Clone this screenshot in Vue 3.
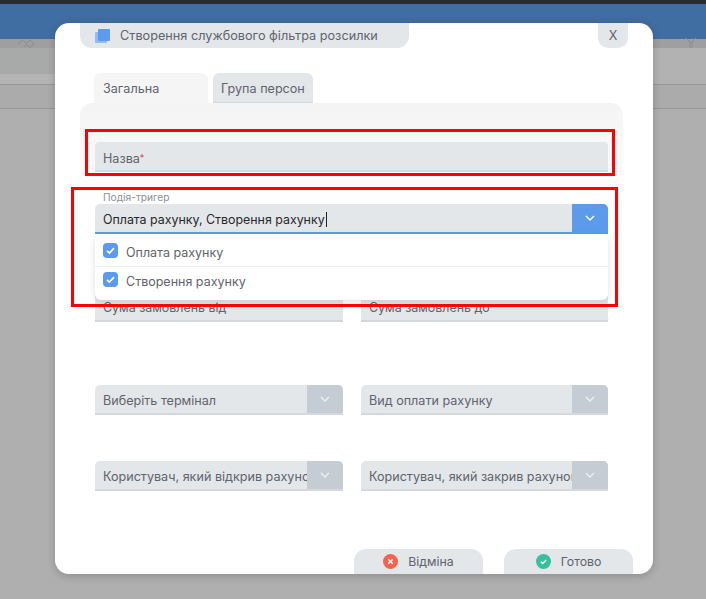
<template>
  <div class="page">
    <div class="topline"></div>
    <div class="topbar"></div>
    <div class="subbar"></div>
    <div class="toolbar"></div>
    <div class="strip"></div>
    <div class="band"></div>
    <svg class="bg-icon bg-left" width="18" height="10" viewBox="0 0 18 10"><path d="M1 6l4.500-4.500L10 6l-3 3M9 6l4-4 4 4-4 3.500z" fill="none" stroke="#8c8c8c" stroke-width="1"/></svg>
    <svg class="bg-icon bg-right" width="12" height="10" viewBox="0 0 12 10"><path d="M1 0l4 4h2l4-4M5 4v6M7 4v6" fill="none" stroke="#8c8c8c" stroke-width="1"/></svg>

    <div class="modal">
      <div class="head">
        <div class="title">
          <svg width="16" height="16" viewBox="0 0 16 16">
            <rect x="0" y="4" width="12" height="11" rx="1" fill="#8fbcf5"/>
            <rect x="3" y="1" width="12" height="12" rx="1" fill="#5c9bec"/>
          </svg>
          <span>Створення службового фільтра розсилки</span>
        </div>
        <div class="close">X</div>
      </div>

      <div class="tabs">
        <div class="tab active">Загальна</div>
        <div class="tab">Група персон</div>
      </div>

      <div class="panel">
        <div class="field name-field"><span>Назва<i>*</i></span></div>

        <div class="trigger-label">Подія-тригер</div>
        <div class="trigger">
          <div class="select open">
            <div class="value">Оплата рахунку, Створення рахунку<b class="caret"></b></div>
            <div class="arrow">
              <svg width="10" height="6" viewBox="0 0 10 6"><path d="M1 1l4 4 4-4" fill="none" stroke="#fff" stroke-width="1.4"/></svg>
            </div>
          </div>
          <div class="dropdown">
            <div class="option" v-for="o in options" :key="o">
              <svg width="15" height="15" viewBox="0 0 15 15">
                <rect width="15" height="15" rx="4" fill="#5c9bec"/>
                <path d="M4 7.800l2.400 2.300L11 5.200" fill="none" stroke="#fff" stroke-width="1.700"/>
              </svg>
              <span>{{ o }}</span>
            </div>
          </div>
        </div>

        <div class="grid sums">
          <div class="field" v-for="s in sums" :key="s"><span>{{ s }}</span></div>
        </div>

        <div class="grid selects">
          <div class="select" v-for="s in selects" :key="s">
            <div class="value">{{ s }}</div>
            <div class="arrow">
              <svg width="10" height="6" viewBox="0 0 10 6"><path d="M1 1l4 4 4-4" fill="none" stroke="#eef0f2" stroke-width="1.400"/></svg>
            </div>
          </div>
        </div>
      </div>

      <div class="foot">
        <div class="btn">
          <svg width="15" height="15" viewBox="0 0 15 15">
            <circle cx="7.500" cy="7.500" r="7.500" fill="#f4634d"/>
            <path d="M5.200 5.200l4.600 4.600M9.800 5.200l-4.600 4.600" stroke="#fff" stroke-width="1.400"/>
          </svg>
          <span>Відміна</span>
        </div>
        <div class="btn">
          <svg width="15" height="15" viewBox="0 0 15 15">
            <circle cx="7.500" cy="7.500" r="7.500" fill="#38bf9b"/>
            <path d="M4.800 7.800l1.900 1.800 3.500-3.700" fill="none" stroke="#fff" stroke-width="1.400"/>
          </svg>
          <span>Готово</span>
        </div>
      </div>

      <div class="mark mark-name"></div>
      <div class="mark mark-trigger"></div>
    </div>
  </div>
</template>

<script setup>
const options = ['Оплата рахунку', 'Створення рахунку']
const sums = ['Сума замовлень від', 'Сума замовлень до']
const selects = [
  'Виберіть термінал',
  'Вид оплати рахунку',
  'Користувач, який відкрив рахунок',
  'Користувач, який закрив рахунок'
]
</script>

<style>
html, body {
  margin: 0;
  background: #afafaf;
}
</style>

<style scoped>
.page {
  position: relative;
  width: 706px;
  height: 599px;
  overflow: hidden;
  background: #afafaf;
  font-family: Inter, "Noto Sans", sans-serif;
  font-size: 12.6px;
  color: #5f636d;
}
.topline {
  height: 4px;
  background: #2a2b35;
}
.topbar {
  height: 35px;
  background: #406da2;
}
.subbar {
  height: 9px;
  background: #9e9f9f;
}
.toolbar {
  height: 26px;
  background: linear-gradient(to right, #a8aaaa 353px, #b2b2b2 353px);
}
.strip {
  height: 10px;
  background: linear-gradient(to right, #b4b4b4 353px, #b2b2b2 353px);
}
.band {
  height: 25px;
  box-sizing: border-box;
  border-top: 1px solid #979797;
  border-bottom: 1px solid #979797;
  background: #ababab;
}
.bg-icon {
  position: absolute;
  top: 38px;
}
.bg-left { left: 17px; }
.bg-right { left: 685px; }

.modal {
  position: absolute;
  left: 55px;
  top: 23px;
  box-sizing: border-box;
  width: 598px;
  height: 551px;
  padding: 0 25px;
  background: #fff;
  border-radius: 14px;
  box-shadow: 0 2px 8px rgba(0, 0, 0, 0.2);
  overflow: hidden;
}
.head {
  display: flex;
  justify-content: space-between;
}
.title {
  display: flex;
  align-items: center;
  gap: 9px;
  width: 329px;
  height: 25px;
  box-sizing: border-box;
  padding-left: 15px;
  background: #e4e7ea;
  border-radius: 0 0 12px 12px;
  font-size: 12.7px;
}
.close {
  width: 30px;
  height: 25px;
  line-height: 25px;
  text-align: center;
  background: #e4e7ea;
  border-radius: 0 0 10px 10px;
}
.tabs {
  display: flex;
  gap: 5px;
  margin: 25px 0 0 14px;
}
.tab {
  height: 30px;
  line-height: 31px;
  padding: 0 8px;
  box-sizing: border-box;
  background: #e4e7ea;
  border-radius: 6px 6px 0 0;
  border-bottom: 1px solid #d5d9de;
}
.tab.active {
  width: 114px;
  padding-left: 9px;
  background: #f5f5f5;
  border-bottom: 0;
}
.panel {
  width: 543px;
  height: 440px;
  padding: 39px 15px 0;
  box-sizing: border-box;
  border-radius: 12px 12px 0 0;
  background: linear-gradient(#f4f4f5 0, #fff 100px);
}
.field {
  height: 30px;
  box-sizing: border-box;
  padding: 0 8px;
  line-height: 31px;
  background: #e4e7ea;
  border-bottom: 2px solid #d5d9de;
  border-radius: 4px 4px 0 0;
}
.field i {
  color: #e8314a;
  font-style: normal;
  font-size: 9px;
  vertical-align: 2px;
}
.trigger-label {
  margin: 18px 0 0 8px;
  height: 14px;
  font-size: 10.2px;
  line-height: 14px;
  color: #8b9098;
}
.trigger {
  position: relative;
}
.select {
  display: flex;
  height: 30px;
  box-sizing: border-box;
  background: #e4e7ea;
  border-bottom: 2px solid #d5d9de;
  border-radius: 5px 5px 0 0;
  overflow: hidden;
}
.select.open {
  border-bottom-color: #5c9bec;
}
.select.open .value {
  color: #25272c;
  font-size: 12.4px;
}
.value {
  flex: 1;
  min-width: 0;
  padding-left: 8px;
  line-height: 31px;
  white-space: nowrap;
  overflow: hidden;
  font-size: 12.6px;
}
.caret {
  display: inline-block;
  width: 1px;
  height: 15px;
  margin-left: 1px;
  vertical-align: -3px;
  background: #222;
}
.arrow {
  display: flex;
  align-items: center;
  justify-content: center;
  flex: 0 0 36px;
  background: #c6ccd4;
}
.open .arrow {
  background: #5c9bec;
}
.dropdown {
  position: absolute;
  left: 0;
  right: 0;
  top: 30px;
  z-index: 2;
  background: #fff;
  border-radius: 6px;
  box-shadow: 0 2px 7px rgba(0, 0, 0, 0.13);
  font-size: 12.5px;
}
.option {
  display: flex;
  align-items: flex-start;
  gap: 8px;
  height: 32px;
  box-sizing: border-box;
  padding: 9px 8px 0;
}
.option span {
  line-height: 19px;
}
.option + .option {
  height: 34px;
  padding-top: 5px;
  border-top: 1px solid #eceef0;
}
.grid {
  display: grid;
  grid-template-columns: 248px 247px;
  column-gap: 18px;
}
.sums {
  margin-top: 58px;
}
.sums .field {
  font-size: 12.45px;
}
.selects {
  margin-top: 63px;
  row-gap: 46px;
}
.foot {
  position: absolute;
  left: 299px;
  bottom: 0;
  display: flex;
  gap: 21px;
}
.btn {
  display: flex;
  align-items: center;
  justify-content: center;
  gap: 10px;
  width: 129px;
  height: 25px;
  background: #e4e7ea;
  border-radius: 12px 12px 0 0;
  font-size: 12.3px;
}
.mark {
  position: absolute;
  z-index: 3;
  box-sizing: border-box;
  border: 3px solid #ff0000;
}
.mark-name {
  left: 30px;
  top: 106px;
  width: 530px;
  height: 47px;
}
.mark-trigger {
  left: 16px;
  top: 164px;
  width: 547px;
  height: 120px;
}
</style>
